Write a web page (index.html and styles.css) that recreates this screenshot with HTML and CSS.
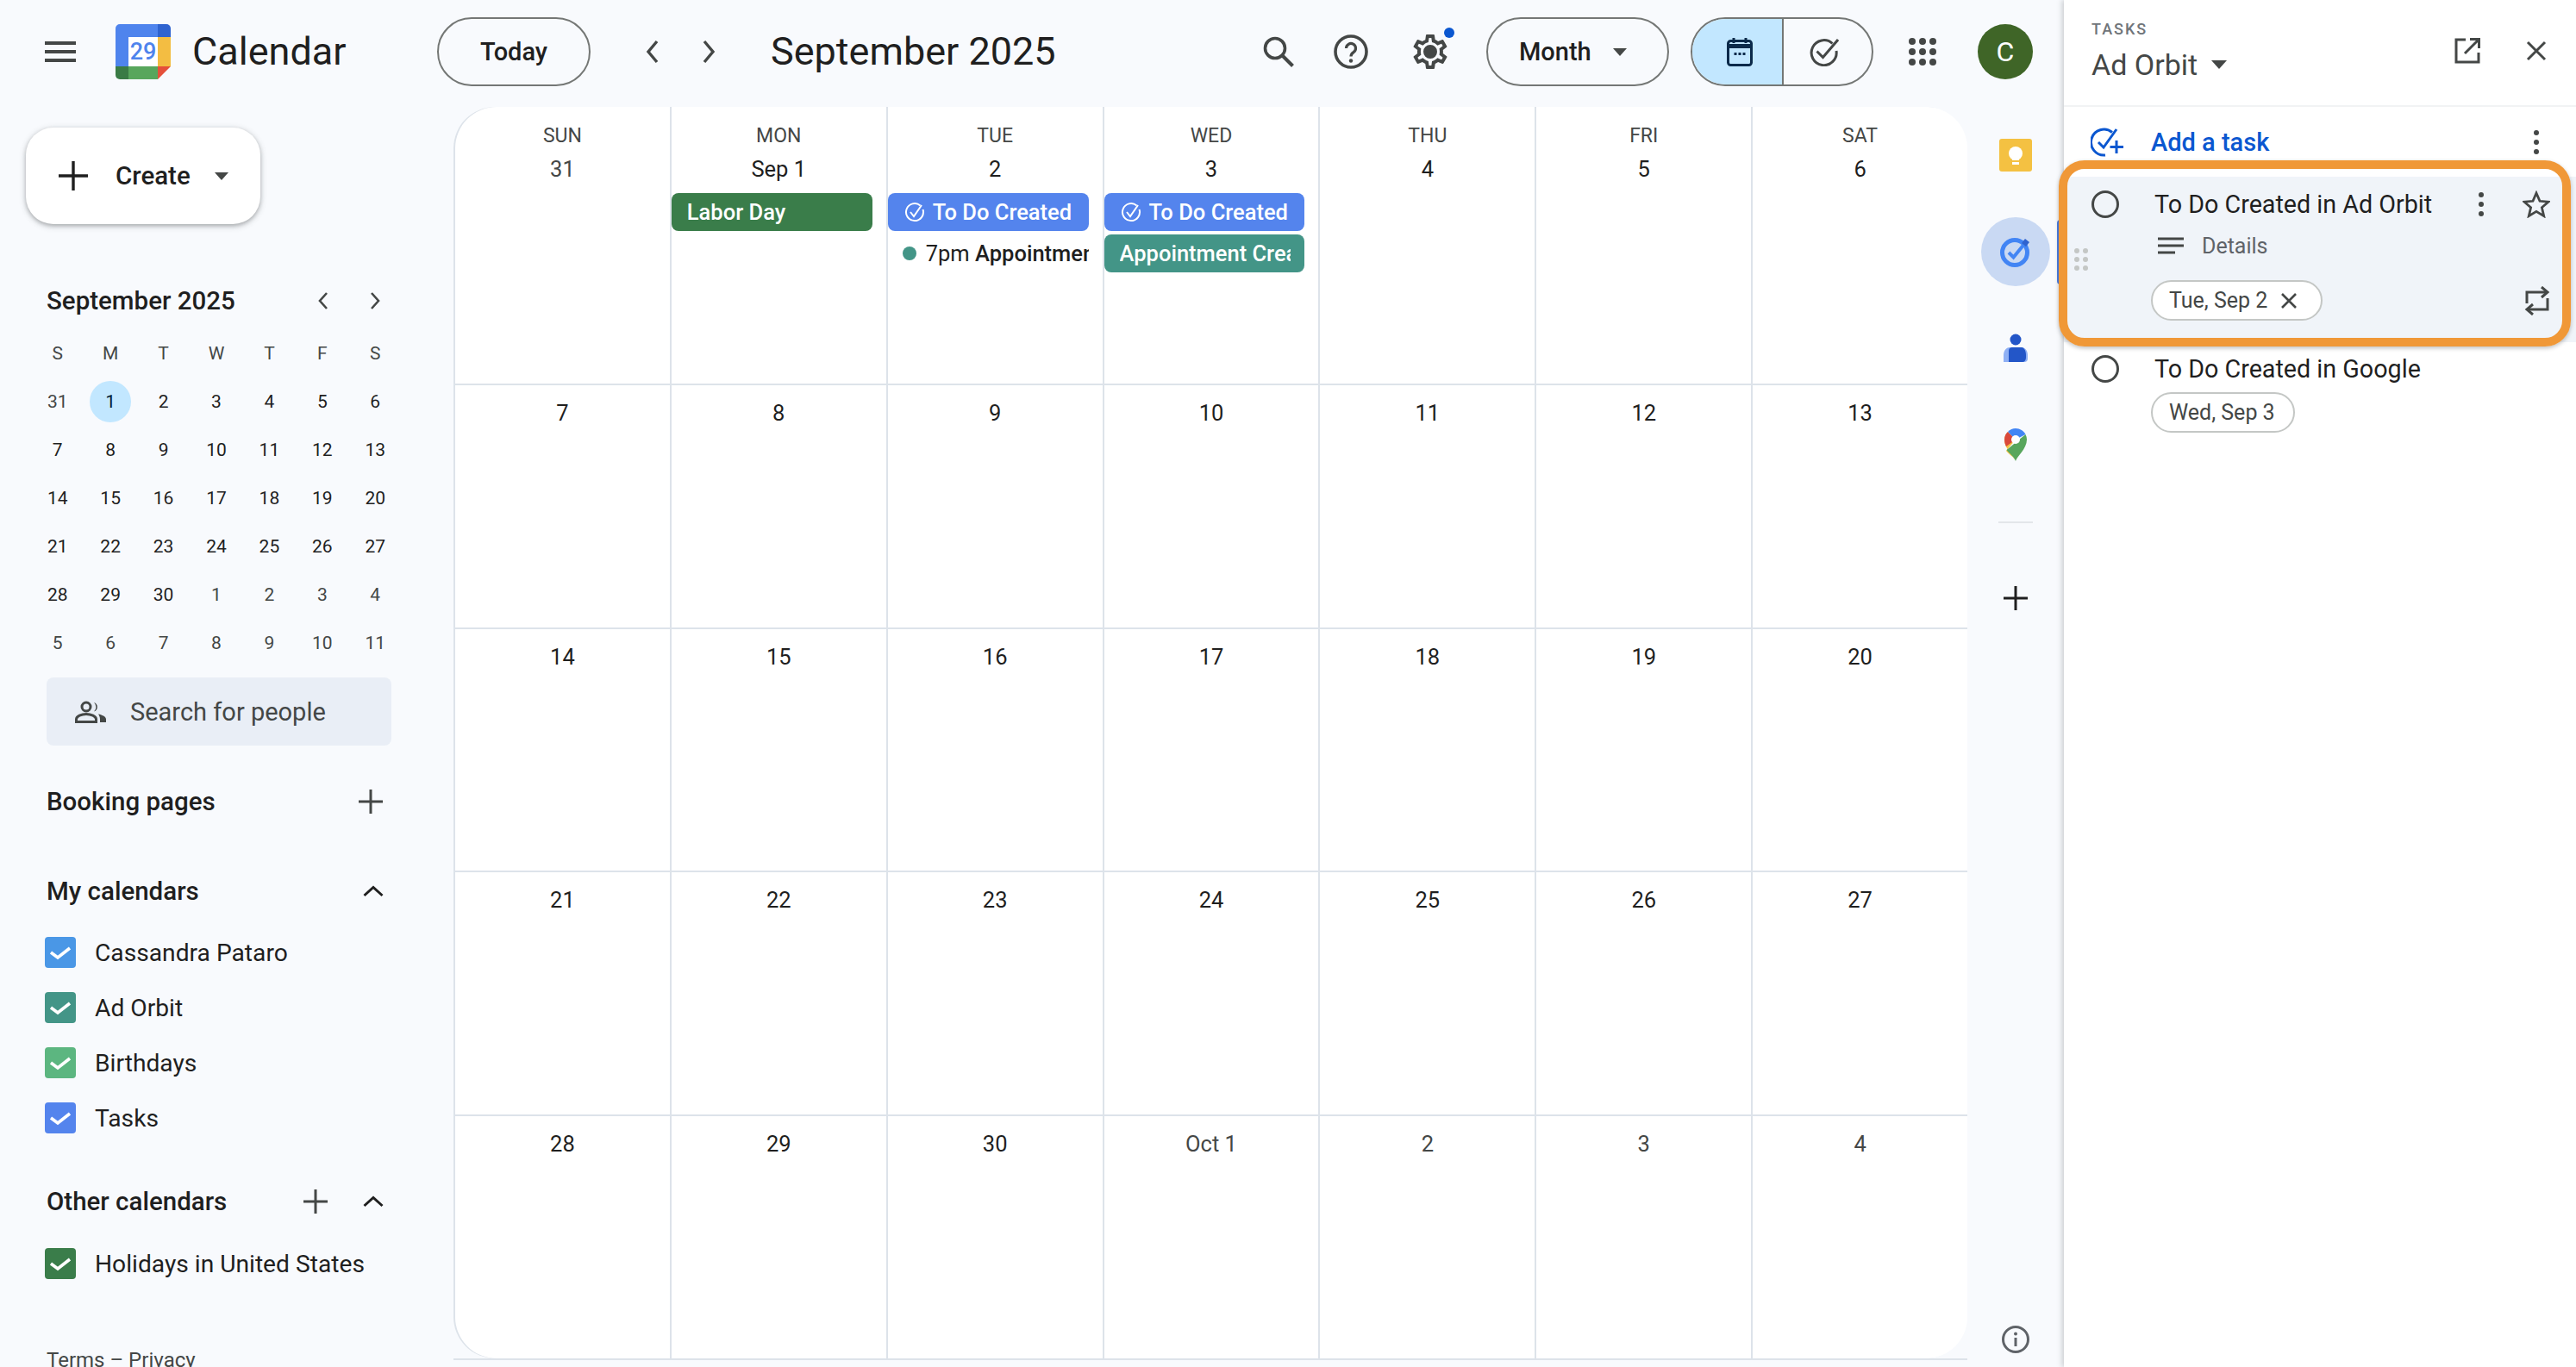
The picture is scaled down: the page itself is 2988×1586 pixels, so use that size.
FILE: index.html
```html
<!DOCTYPE html>
<html lang="en">
<head>
<meta charset="utf-8">
<title>Calendar</title>
<link rel="stylesheet" href="styles.css">
</head>
<body>
<div class="app">
  <div class="main">
    <header class="topbar">
      <svg class="ic-menu" viewBox="0 0 36 24"><path d="M0 2h36M0 12h36M0 22h36" stroke="#444746" stroke-width="4"/></svg>
      <svg class="logo" viewBox="0 0 64 64">
        <path d="M5 0h44v15H15v34H0V5a5 5 0 0 1 5-5z" fill="#4f84ed"/>
        <path d="M49 0h10a5 5 0 0 1 5 5v10H49z" fill="#2f63cf"/>
        <rect x="49" y="15" width="15" height="34" fill="#f3bd42"/>
        <rect x="15" y="49" width="34" height="15" fill="#58a65c"/>
        <path d="M0 49h15v15H5a5 5 0 0 1-5-5z" fill="#3a7b45"/>
        <path d="M49 49h15L49 64z" fill="#e5503a"/>
        <rect x="15" y="15" width="34" height="34" fill="#fff"/>
        <text x="32" y="41" text-anchor="middle" class="logo-num">29</text>
      </svg>
      <span class="brand">Calendar</span>
      <button class="pill today">Today</button>
      <svg class="ic-chev prev" viewBox="0 0 18 30"><path d="M14 3 4 15l10 12" fill="none" stroke="#444746" stroke-width="3.4"/></svg>
      <svg class="ic-chev next" viewBox="0 0 18 30"><path d="m4 3 10 12L4 27" fill="none" stroke="#444746" stroke-width="3.4"/></svg>
      <h1 class="title">September 2025</h1>
      <svg class="ic-search" viewBox="0 0 36 36"><circle cx="14" cy="14" r="11.500" fill="none" stroke="#444746" stroke-width="3.600"/><path d="m22.500 22.500 12 12" stroke="#444746" stroke-width="4"/></svg>
      <svg class="ic-help" viewBox="0 0 40 40"><circle cx="20" cy="20" r="18" fill="none" stroke="#444746" stroke-width="3.600"/><path d="M14.500 16a5.500 5.500 0 1 1 8.500 4.600c-2 1.400-3 2.400-3 5" fill="none" stroke="#444746" stroke-width="3.200"/><circle cx="20" cy="30.500" r="2.200" fill="#444746"/></svg>
      <div class="gear-wrap">
        <svg class="ic-gear" viewBox="0 0 24 24"><path fill="#444746" d="M19.400 13c.04-.33.06-.66.06-1s-.02-.67-.06-1l2.100-1.650a.5.5 0 0 0 .12-.64l-2-3.460a.5.5 0 0 0-.61-.22l-2.490 1a7.300 7.300 0 0 0-1.690-.98l-.38-2.650A.49.49 0 0 0 14 2h-4a.49.49 0 0 0-.49.420l-.38 2.650c-.61.250-1.170.580-1.690.980l-2.490-1a.5.5 0 0 0-.61.220l-2 3.460a.49.49 0 0 0 .12.640L4.570 11c-.04.330-.07.670-.07 1s.03.670.07 1l-2.110 1.650a.5.5 0 0 0-.12.640l2 3.460c.12.220.39.300.61.220l2.490-1c.52.400 1.080.730 1.690.980l.38 2.650c.03.240.24.420.49.420h4c.25 0 .46-.18.49-.42l.38-2.650c.61-.25 1.170-.58 1.690-.98l2.490 1c.23.080.49 0 .61-.22l2-3.460a.5.5 0 0 0-.12-.64zm-1.980-1.710c.04.310.05.520.05.710s-.02.410-.05.710l-.14 1.130.89.700 1.080.840-.7 1.210-1.270-.51-1.040-.42-.9.680c-.43.320-.84.560-1.250.730l-1.060.430-.16 1.130-.2 1.350h-1.400l-.19-1.350-.16-1.130-1.060-.43c-.43-.18-.83-.41-1.230-.71l-.91-.7-1.060.430-1.270.51-.7-1.210 1.080-.84.890-.7-.14-1.130c-.03-.31-.05-.54-.05-.72s.02-.41.05-.71l.14-1.130-.89-.7-1.080-.84.7-1.210 1.270.51 1.040.42.9-.68c.43-.32.840-.56 1.250-.73l1.060-.43.16-1.130.2-1.350h1.390l.19 1.350.16 1.130 1.060.43c.43.180.83.410 1.230.710l.91.7 1.060-.43 1.270-.51.7 1.210-1.070.850-.89.7zM12 8a4 4 0 1 0 0 8 4 4 0 0 0 0-8z"/></svg>
        <span class="gear-dot"></span>
      </div>
      <button class="pill month"><span>Month</span><i class="caret small"></i></button>
      <div class="toggle">
        <span class="toggle-on"><svg class="ic-cal" viewBox="0 0 30 33"><path d="M8 0v6M22 0v6" stroke="#0b2a4a" stroke-width="3"/><rect x="1.500" y="3.500" width="27" height="28" rx="3" fill="none" stroke="#0b2a4a" stroke-width="3"/><path d="M2 9.500h26" stroke="#0b2a4a" stroke-width="5"/><path d="M8.500 18.500h3M13.500 18.500h3M18.500 18.500h3" stroke="#0b2a4a" stroke-width="3"/></svg></span>
        <span class="toggle-off"><svg class="ic-done" viewBox="0 0 34 33"><path d="M26.500 6.500A14.500 14.500 0 1 0 31 15" fill="none" stroke="#444746" stroke-width="3"/><path d="m8.500 15.500 7 7L33 2" fill="none" stroke="#444746" stroke-width="3"/></svg></span>
      </div>
      <div class="apps"><i></i><i></i><i></i><i></i><i></i><i></i><i></i><i></i><i></i></div>
      <span class="avatar">C</span>
    </header>
    <div class="body-row">
      <aside class="sidebar">
        <button class="create"><svg class="ic-plus-lg" viewBox="0 0 34 34"><path d="M17 0v34M0 17h34" stroke="#1f1f1f" stroke-width="3.400"/></svg><span>Create</span><i class="caret small"></i></button>
        <div class="mini-head">
          <span>September 2025</span>
          <svg class="mini-chev mc-prev" viewBox="0 0 14 24"><path d="M11 3 3 12l8 9" fill="none" stroke="#444746" stroke-width="2.600"/></svg>
          <svg class="mini-chev mc-next" viewBox="0 0 14 24"><path d="m3 3 8 9-8 9" fill="none" stroke="#444746" stroke-width="2.600"/></svg>
        </div>
        <div class="mini-grid">
          <span class="dow">S</span><span class="dow">M</span><span class="dow">T</span><span class="dow">W</span><span class="dow">T</span><span class="dow">F</span><span class="dow">S</span>
          <span class="om">31</span><span><b class="sel">1</b></span><span>2</span><span>3</span><span>4</span><span>5</span><span>6</span>
          <span>7</span><span>8</span><span>9</span><span>10</span><span>11</span><span>12</span><span>13</span>
          <span>14</span><span>15</span><span>16</span><span>17</span><span>18</span><span>19</span><span>20</span>
          <span>21</span><span>22</span><span>23</span><span>24</span><span>25</span><span>26</span><span>27</span>
          <span>28</span><span>29</span><span>30</span><span class="om">1</span><span class="om">2</span><span class="om">3</span><span class="om">4</span>
          <span class="om">5</span><span class="om">6</span><span class="om">7</span><span class="om">8</span><span class="om">9</span><span class="om">10</span><span class="om">11</span>
        </div>
        <div class="people">
          <svg class="ic-people" viewBox="0 0 36 26"><circle cx="13" cy="7" r="5" fill="none" stroke="#444746" stroke-width="3"/><path d="M1.500 24.500v-3c0-3.500 6-6 11.500-6s11.500 2.500 11.500 6v3z" fill="none" stroke="#444746" stroke-width="3"/><path d="M22 2a5.500 5.500 0 0 1 0 10.500A7 7 0 0 0 22 2zM27 15.500c4 .8 9 2.700 9 6V25h-7v-3.500c0-2.400-.8-4.400-2-6z" fill="#444746"/></svg>
          <span>Search for people</span>
        </div>
        <div class="sec sec-book"><span>Booking pages</span><svg class="ic-plus" viewBox="0 0 28 28"><path d="M14 0v28M0 14h28" stroke="#444746" stroke-width="3"/></svg></div>
        <div class="sec sec-my"><span>My calendars</span><svg class="ic-up" viewBox="0 0 24 14"><path d="M1.500 12 12 2.500 22.500 12" fill="none" stroke="#1f1f1f" stroke-width="3"/></svg></div>
        <ul class="cals cals-my">
          <li><span class="cb c-blue"><svg viewBox="0 0 36 36"><path d="m7 18 8 6 14-11" fill="none" stroke="#fff" stroke-width="3.600"/></svg></span>Cassandra Pataro</li>
          <li><span class="cb c-teal"><svg viewBox="0 0 36 36"><path d="m7 18 8 6 14-11" fill="none" stroke="#fff" stroke-width="3.600"/></svg></span>Ad Orbit</li>
          <li><span class="cb c-mint"><svg viewBox="0 0 36 36"><path d="m7 18 8 6 14-11" fill="none" stroke="#fff" stroke-width="3.600"/></svg></span>Birthdays</li>
          <li><span class="cb c-task"><svg viewBox="0 0 36 36"><path d="m7 18 8 6 14-11" fill="none" stroke="#fff" stroke-width="3.600"/></svg></span>Tasks</li>
        </ul>
        <div class="sec sec-other"><span>Other calendars</span><svg class="ic-plus other-plus" viewBox="0 0 28 28"><path d="M14 0v28M0 14h28" stroke="#444746" stroke-width="3"/></svg><svg class="ic-up" viewBox="0 0 24 14"><path d="M1.500 12 12 2.500 22.500 12" fill="none" stroke="#1f1f1f" stroke-width="3"/></svg></div>
        <ul class="cals cals-other">
          <li><span class="cb c-green"><svg viewBox="0 0 36 36"><path d="m7 18 8 6 14-11" fill="none" stroke="#fff" stroke-width="3.600"/></svg></span>Holidays in United States</li>
        </ul>
        <div class="terms">Terms – Privacy</div>
      </aside>
      <div class="grid-wrap">
        <div class="grid">
          <div class="cell head"><span class="wd">SUN</span><span class="num om">31</span></div>
          <div class="cell head"><span class="wd">MON</span><span class="num">Sep 1</span><div class="ev e-green">Labor Day</div></div>
          <div class="cell head"><span class="wd">TUE</span><span class="num">2</span>
            <div class="ev e-blue"><svg class="ic-ev" viewBox="0 0 24 24"><path d="M18.500 4.500A10 10 0 1 0 21.500 9" fill="none" stroke="#fff" stroke-width="2"/><path d="m7 12 4 5 9-13" fill="none" stroke="#fff" stroke-width="2"/></svg>To Do Created</div>
            <div class="ev e-plain"><i class="ev-dot"></i><span class="clip"><span class="ev-time">7pm</span> <b>Appointment Created</b></span></div>
          </div>
          <div class="cell head"><span class="wd">WED</span><span class="num">3</span>
            <div class="ev e-blue"><svg class="ic-ev" viewBox="0 0 24 24"><path d="M18.500 4.500A10 10 0 1 0 21.500 9" fill="none" stroke="#fff" stroke-width="2"/><path d="m7 12 4 5 9-13" fill="none" stroke="#fff" stroke-width="2"/></svg>To Do Created</div>
            <div class="ev e-teal"><span class="clip">Appointment Created</span></div>
          </div>
          <div class="cell head"><span class="wd">THU</span><span class="num">4</span></div>
          <div class="cell head"><span class="wd">FRI</span><span class="num">5</span></div>
          <div class="cell head"><span class="wd">SAT</span><span class="num">6</span></div>

          <div class="cell"><span class="num">7</span></div><div class="cell"><span class="num">8</span></div><div class="cell"><span class="num">9</span></div><div class="cell"><span class="num">10</span></div><div class="cell"><span class="num">11</span></div><div class="cell"><span class="num">12</span></div><div class="cell"><span class="num">13</span></div>
          <div class="cell"><span class="num">14</span></div><div class="cell"><span class="num">15</span></div><div class="cell"><span class="num">16</span></div><div class="cell"><span class="num">17</span></div><div class="cell"><span class="num">18</span></div><div class="cell"><span class="num">19</span></div><div class="cell"><span class="num">20</span></div>
          <div class="cell"><span class="num">21</span></div><div class="cell"><span class="num">22</span></div><div class="cell"><span class="num">23</span></div><div class="cell"><span class="num">24</span></div><div class="cell"><span class="num">25</span></div><div class="cell"><span class="num">26</span></div><div class="cell"><span class="num">27</span></div>
          <div class="cell last"><span class="num">28</span></div><div class="cell last"><span class="num">29</span></div><div class="cell last"><span class="num">30</span></div><div class="cell last"><span class="num om">Oct 1</span></div><div class="cell last"><span class="num om">2</span></div><div class="cell last"><span class="num om">3</span></div><div class="cell last"><span class="num om">4</span></div>
        </div>
      </div>
      <nav class="rail">
        <div class="rail-btn"><svg class="ic-keep" viewBox="0 0 38 38"><rect width="38" height="38" rx="3" fill="#f4c142"/><circle cx="19" cy="17" r="8" fill="#fff"/><rect x="15" y="21" width="8" height="4" fill="#fff"/><rect x="15" y="27" width="8" height="3" fill="#fff"/></svg></div>
        <div class="rail-btn active"><svg class="ic-tasks" viewBox="0 0 36 36"><circle cx="17" cy="19" r="14.500" fill="none" stroke="#4285f4" stroke-width="5"/><path d="m10 19 5.500 5.500L29 8" fill="none" stroke="#4285f4" stroke-width="4"/><path d="m25 8 4-5 5 4-4 5z" fill="#2f63cf"/></svg></div>
        <div class="rail-btn"><svg class="ic-contact" viewBox="0 0 28 34"><circle cx="14" cy="7" r="6.500" fill="#2356c8"/><path d="M0 33V25c0-6 4-9 7-9h14c3 0 7 3 7 9v4a4 4 0 0 1-4 4z" fill="#8fb0f4"/><path d="M6 33V20c0-3 2-4 4-4h11c2 0 5 3 5 9v3c0 3-2 5-4 5z" fill="#2356c8"/></svg></div>
        <div class="rail-btn"><svg class="ic-maps" viewBox="0 0 26 38">
          <path d="M13 38C10 30 0 24 0 13 0 9 2 6 4 4l9 9-11 13C6 31 11 33 13 38z" fill="#f4c142"/>
          <path d="M13 38c1-5 13-14 13-25 0-2-.5-4-1.500-6L2.500 25c3 4 9 8 10.500 13z" fill="#58a65c"/>
          <path d="M4 4C1.500 6 0 9 0 13c0 3 .8 5.500 2 8l11-8z" fill="#d9483b"/>
          <path d="M4 4c2.500-2.500 5.500-4 9-4 5 0 9.500 3 11.500 7L13 13z" fill="#4285f4"/>
          <circle cx="13" cy="13" r="5" fill="#fff"/></svg></div>
        <div class="rail-sep"></div>
        <svg class="ic-plus rail-plus" viewBox="0 0 28 28"><path d="M14 0v28M0 14h28" stroke="#1f1f1f" stroke-width="3"/></svg>
        <svg class="ic-info" viewBox="0 0 32 32"><circle cx="16" cy="16" r="14.500" fill="none" stroke="#5f6368" stroke-width="3"/><path d="M16 14v10" stroke="#5f6368" stroke-width="3"/><circle cx="16" cy="9.500" r="2" fill="#5f6368"/></svg>
      </nav>
    </div>
  </div>
  <aside class="tasks">
    <div class="t-head">
      <div class="t-title">
        <div class="t-label">TASKS</div>
        <div class="t-list">Ad Orbit<i class="caret"></i></div>
      </div>
      <svg class="ic-open" viewBox="0 0 30 30"><path d="M13 2H2v26h26V17" fill="none" stroke="#444746" stroke-width="3"/><path d="M12 18 28 2M18 1.500h10.500V12" fill="none" stroke="#444746" stroke-width="3"/></svg>
      <svg class="ic-x" viewBox="0 0 24 24"><path d="m2 2 20 20M22 2 2 22" stroke="#444746" stroke-width="3"/></svg>
    </div>
    <div class="t-add">
      <svg class="ic-add" viewBox="0 0 38 34"><path d="M25 5.500A15 15 0 1 0 17 32" fill="none" stroke="#0b57d0" stroke-width="3"/><path d="m9 17 6 6L30 2" fill="none" stroke="#0b57d0" stroke-width="3"/><path d="M30 15v15M22.500 22.500H38" stroke="#0b57d0" stroke-width="3"/></svg>
      <span>Add a task</span>
      <svg class="ic-dots" viewBox="0 0 6 28"><circle cx="3" cy="3" r="3"/><circle cx="3" cy="14" r="3"/><circle cx="3" cy="25" r="3"/></svg>
    </div>
    <div class="task sel-task">
      <div class="drag"><i></i><i></i><i></i><i></i><i></i><i></i></div>
      <span class="radio"></span>
      <div class="t-body">
        <div class="t-row1"><span class="t-name">To Do Created in Ad Orbit</span>
          <svg class="ic-dots" viewBox="0 0 6 28"><circle cx="3" cy="3" r="3"/><circle cx="3" cy="14" r="3"/><circle cx="3" cy="25" r="3"/></svg>
          <svg class="ic-star" viewBox="0 0 32 32"><path d="m16 3 4 9.300 10 .900-7.600 6.600 2.300 9.800L16 24.400l-8.700 5.200 2.300-9.800L2 13.200l10-.900z" fill="none" stroke="#444746" stroke-width="2.800"/></svg>
        </div>
        <div class="t-details"><svg class="ic-lines" viewBox="0 0 30 20"><path d="M0 2h30M0 10h30M0 18h20" stroke="#444746" stroke-width="3"/></svg><span>Details</span></div>
        <div class="t-row3"><span class="chip">Tue, Sep 2<svg class="ic-chipx" viewBox="0 0 20 20"><path d="m2 2 16 16M18 2 2 18" stroke="#444746" stroke-width="2.600"/></svg></span>
          <svg class="ic-repeat" viewBox="0 0 30 34"><path d="M3 20V7h23" fill="none" stroke="#444746" stroke-width="3"/><path d="m20 1 7 6-7 6" fill="none" stroke="#444746" stroke-width="3"/><path d="M27 14v13H4" fill="none" stroke="#444746" stroke-width="3"/><path d="m10 21-7 6 7 6" fill="none" stroke="#444746" stroke-width="3"/></svg>
        </div>
      </div>
    </div>
    <div class="task plain-task">
      <span class="radio"></span>
      <div class="t-body">
        <div class="t-name">To Do Created in Google</div>
        <span class="chip chip2">Wed, Sep 3</span>
      </div>
    </div>
    <div class="rail-tab"></div>
    <div class="callout"></div>
  </aside>
</div>
</body>
</html>
```

FILE: styles.css
```css
* { box-sizing: border-box; }
html, body { margin: 0; padding: 0; height: 100%; overflow: hidden; }
body { font-family: Roboto, "Liberation Sans", sans-serif; color: #1f1f1f; background: #f8fafd; }
ul { list-style: none; margin: 0; padding: 0; }
svg { display: block; flex: none; }
button { font: inherit; color: inherit; padding: 0; }

.app { display: flex; width: 2988px; height: 1586px; }
.main { width: 2394px; display: flex; flex-direction: column; }

/* top bar */
.topbar { height: 124px; display: flex; align-items: flex-start; flex: none; }
.ic-menu { width: 36px; height: 24px; margin: 48px 0 0 52px; }
.logo { width: 64px; height: 64px; margin: 28px 0 0 46px; }
.logo-num { font: 500 27px Roboto, sans-serif; fill: #4f84ed; }
.brand { font-size: 45px; line-height: 56px; margin: 32px 0 0 25px; width: 284px; color: #1f1f1f; }
.pill { height: 80px; margin-top: 20px; border: 2px solid #747775; border-radius: 40px; background: transparent; font-size: 29px; font-weight: 500; }
.today { width: 178px; }
.ic-chev { width: 18px; height: 30px; margin-top: 45px; }
.prev { margin-left: 63px; }
.next { margin-left: 47px; }
.title { font-size: 45px; font-weight: 400; line-height: 56px; margin: 32px 0 0 63px; width: 571px; }
.ic-search { width: 36px; height: 36px; margin: 42px 0 0 0; }
.ic-help { width: 40px; height: 40px; margin: 40px 0 0 46px; }
.gear-wrap { position: relative; width: 42px; height: 42px; margin: 39px 0 0 51px; }
.ic-gear { width: 48px; height: 48px; margin: -3px 0 0 -3px; }
.gear-dot { position: absolute; left: 37px; top: -7px; width: 12px; height: 12px; border-radius: 50%; background: #0b57d0; }
.month { width: 212px; margin-left: 44px; display: flex; align-items: center; padding-left: 36px; }
.toggle { width: 212px; height: 80px; margin: 20px 0 0 25px; border: 2px solid #747775; border-radius: 40px; display: flex; overflow: hidden; }
.toggle-on { width: 106px; background: #c2e7ff; border-right: 2px solid #747775; display: flex; align-items: center; justify-content: center; }
.toggle-off { flex: 1; display: flex; align-items: center; justify-content: center; }
.ic-cal { width: 30px; height: 33px; margin-left: 6px; }
.ic-done { width: 34px; height: 33px; margin-right: 8px; }
.apps { width: 32px; height: 32px; margin: 44px 0 0 41px; display: grid; grid-template-columns: repeat(3, 8px); grid-auto-rows: 8px; gap: 4px; }
.apps i { border-radius: 50%; background: #444746; }
.avatar { width: 64px; height: 64px; margin: 28px 0 0 48px; border-radius: 50%; background: #3f6527; color: #fff; font-size: 32px; font-weight: 400; display: flex; align-items: center; justify-content: center; }

.caret { display: inline-block; border-left: 9px solid transparent; border-right: 9px solid transparent; border-top: 10px solid #444746; }
.caret.small { border-left-width: 8px; border-right-width: 8px; border-top-width: 9px; margin-left: 25px; }

/* body row */
.body-row { flex: 1; display: flex; min-height: 0; }

/* sidebar */
.sidebar { width: 526px; flex: none; overflow: hidden; }
.create { width: 272px; height: 112px; margin: 24px 0 0 30px; border: 0; border-radius: 32px; background: #fff; box-shadow: 0 2px 6px 2px rgba(60,64,67,.15), 0 2px 4px rgba(60,64,67,.3); display: flex; align-items: center; padding-left: 38px; font-size: 29.500px; font-weight: 500; }
.ic-plus-lg { width: 34px; height: 34px; margin-right: 32px; }
.create .caret.small { margin-left: 28px; }
.mini-head { height: 40px; margin: 69px 0 0 54px; width: 392px; display: flex; align-items: center; font-size: 29.500px; font-weight: 500; }
.mini-head span { flex: 1; }
.mini-chev { width: 14px; height: 24px; }
.mc-next { margin-left: 46px; margin-right: 4px; }
.mini-grid { width: 430px; margin: 13px 0 0 36px; display: grid; grid-template-columns: repeat(7, 1fr); grid-auto-rows: 56px; font-size: 21px; font-weight: 400; text-align: center; color: #1f1f1f; }
.mini-grid span { display: flex; align-items: center; justify-content: center; }
.mini-grid .dow { color: #444746; }
.mini-grid .om { color: #444746; }
.sel { width: 48px; height: 48px; border-radius: 50%; background: #c2e7ff; font-weight: 400; display: flex; align-items: center; justify-content: center; color: #001d35; }
.people { height: 79px; margin: 12px 0 0 54px; width: 400px; border-radius: 8px; background: #e9eef6; display: flex; align-items: center; padding-left: 33px; font-size: 29px; color: #444746; }
.ic-people { width: 36px; height: 26px; margin-right: 28px; }
.sec { height: 40px; width: 400px; margin-left: 54px; display: flex; align-items: center; font-size: 29.500px; font-weight: 500; }
.sec span { flex: 1; }
.ic-plus { width: 28px; height: 28px; }
.sec .ic-plus { margin-right: 10px; }
.sec .ic-up { width: 24px; height: 14px; margin-right: 9px; }
.sec-book { margin-top: 45px; }
.sec-my { margin-top: 64px; }
.sec-other { margin-top: 45px; }
.sec .other-plus { margin-right: 41px; }
.cals { margin-left: 52px; font-size: 28.200px; color: #1f1f1f; }
.cals li { height: 64px; display: flex; align-items: center; }
.cals-my { margin-top: 19px; }
.cals-other { margin-top: 20px; }
.cb { width: 36px; height: 36px; border-radius: 4px; margin-right: 22px; }
.c-blue { background: #4a97e6; }
.c-teal { background: #439587; }
.c-mint { background: #5cb680; }
.c-task { background: #5484ed; }
.c-green { background: #3a7d4a; }
.terms { font-size: 24px; line-height: 30px; margin: 65px 0 0 54px; color: #444746; }

/* grid */
.grid-wrap { flex: 1; height: 1454px; border-bottom: 2px solid #dde3ea; }
.grid { height: 1452px; display: grid; grid-template-columns: repeat(7, 1fr); grid-template-rows: 323px 283px 282px 283px 281px; background: #fff; border-radius: 48px; box-shadow: inset 2px 0 0 #dde3ea; overflow: hidden; }
.cell { display: flex; flex-direction: column; align-items: center; padding-top: 12px; border-bottom: 2px solid #dde3ea; border-left: 2px solid #dde3ea; min-width: 0; }
.cell:nth-child(7n+1) { border-left-color: transparent; }
.cell.last { border-bottom: 0; }
.cell.head { padding-top: 21px; }
.wd { font-size: 23px; line-height: 26px; font-weight: 400; color: #444746; }
.num { font-size: 25.500px; line-height: 40px; font-weight: 400; color: #1f1f1f; }
.num.om { color: #444746; }
.head .num { margin: 5px 0 8px; }
.ev { align-self: stretch; height: 44px; margin: 0 16px 4px 0; border-radius: 8px; color: #fff; font-size: 25.500px; font-weight: 500; line-height: 44px; display: flex; align-items: center; white-space: nowrap; overflow: hidden; padding-left: 18px; }
.e-green { background: #3a7d4a; }
.e-blue { background: #5484ed; padding-left: 19px; }
.e-teal { background: #439587; padding-right: 16px; }
.e-plain { color: #1f1f1f; padding-left: 17px; }
.clip { overflow: hidden; display: block; min-width: 0; flex: 1; }
.ev-time { font-weight: 400; }
.ev b { font-weight: 500; }
.ev-dot { width: 16px; height: 16px; border-radius: 50%; background: #439587; margin-right: 11px; flex: none; }
.ic-ev { width: 24px; height: 24px; margin-right: 9px; }

/* rail */
.rail { width: 112px; flex: none; display: flex; flex-direction: column; align-items: center; padding: 16px 0; gap: 32px; }
.rail-btn { width: 80px; height: 80px; border-radius: 50%; display: flex; align-items: center; justify-content: center; flex: none; }
.rail-btn.active { background: #c9d9f3; }
.ic-keep { width: 38px; height: 38px; }
.ic-tasks { width: 36px; height: 36px; }
.ic-contact { width: 28px; height: 34px; }
.ic-maps { width: 26px; height: 38px; }
.rail-sep { width: 40px; height: 2px; background: #e3e6ea; margin-top: 17px; }
.rail-plus { margin-top: 41px; }
.ic-info { width: 32px; height: 32px; margin-top: auto; }

/* tasks panel */
.tasks { position: relative; width: 594px; flex: none; background: #fff; box-shadow: -2px 0 6px rgba(60,64,67,.25); z-index: 1; }
.t-head { height: 124px; border-bottom: 2px solid #f1f3f4; display: flex; align-items: flex-start; padding: 0 34px 0 32px; }
.t-title { flex: 1; }
.t-label { font-size: 18px; line-height: 24px; letter-spacing: 2px; color: #70757a; margin-top: 22px; font-weight: 500; }
.t-list { font-size: 34px; line-height: 44px; margin-top: 7px; color: #444746; display: flex; align-items: center; }
.t-list .caret { margin-left: 16px; }
.ic-open { width: 30px; height: 30px; margin-top: 44px; }
.ic-x { width: 24px; height: 24px; margin: 47px 0 0 53px; }
.t-add { height: 81px; display: flex; align-items: center; padding: 0 43px 0 31px; color: #0b57d0; font-size: 29px; font-weight: 500; }
.t-add span { flex: 1; margin-left: 32px; }
.ic-add { width: 38px; height: 34px; }
.ic-dots { width: 6px; height: 28px; fill: #444746; }
.task { position: relative; display: flex; }
.sel-task { height: 192px; background: #f0f4f9; }
.plain-task { height: 90px; }
.radio { width: 32px; height: 32px; border: 3px solid #444746; border-radius: 50%; margin: 16px 0 0 32px; flex: none; }
.plain-task .radio { margin-top: 15px; }
.t-body { flex: 1; margin-left: 41px; padding-right: 30px; min-width: 0; }
.t-name { font-size: 28.700px; line-height: 40px; color: #1f1f1f; }
.t-row1 { display: flex; align-items: center; height: 40px; margin-top: 12px; }
.t-row1 .t-name { flex: 1; }
.ic-star { width: 32px; height: 32px; margin-left: 45px; }
.t-details { display: flex; align-items: center; height: 32px; margin-top: 12px; margin-left: 4px; font-size: 25px; color: #5f6368; }
.ic-lines { width: 30px; height: 20px; margin-right: 21px; }
.t-row3 { display: flex; align-items: center; justify-content: space-between; margin-top: 24px; margin-left: -4px; }
.chip { display: inline-flex; align-items: center; height: 47px; padding: 0 27px 0 19px; border: 2px solid #c4c7c5; border-radius: 24px; background: #fff; font-size: 25px; color: #444746; }
.chip2 { padding-right: 21px; margin-left: -4px; margin-top: 7px; }
.ic-chipx { width: 20px; height: 20px; margin-left: 15px; }
.ic-repeat { width: 30px; height: 34px; }
.plain-task .t-body { padding-top: 11px; }
.drag { position: absolute; left: 12px; top: 83px; display: grid; grid-template-columns: 6px 6px; grid-auto-rows: 6px; gap: 4px; }
.drag i { background: #c4c7c5; border-radius: 50%; }
.rail-tab { position: absolute; left: -8px; top: 255px; width: 8px; height: 75px; background: #4a7fe8; border-radius: 4px 0 0 4px; }
.callout { position: absolute; left: -6px; top: 186px; width: 594px; height: 216px; border: 10px solid #f09837; border-radius: 30px; box-shadow: 0 2px 5px rgba(0,0,0,.25); }
```
